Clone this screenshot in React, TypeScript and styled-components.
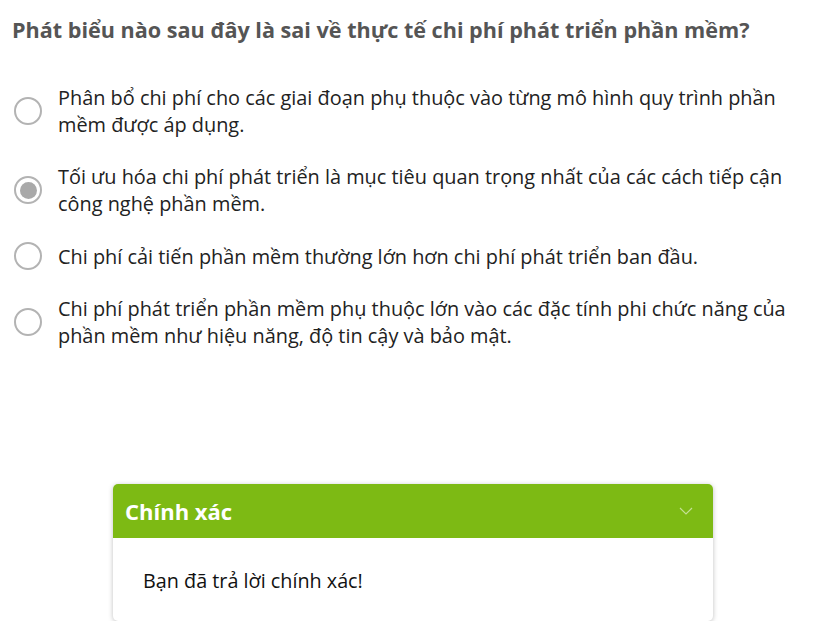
import React from "react";
import styled, { createGlobalStyle } from "styled-components";

const Global = createGlobalStyle`
  html, body { margin: 0; padding: 0; background: #fff; }
  body { font-family: "Open Sans", "Noto Sans", sans-serif; }
`;

const Page = styled.div`
  padding: 14px 12px 0 12px;
  width: 833px;
  box-sizing: border-box;
`;

const Question = styled.h1`
  margin: 0;
  font-size: 21.6px;
  line-height: 32px;
  font-weight: 700;
  color: #555;
`;

const Options = styled.div`
  display: flex;
  flex-direction: column;
  gap: 25px;
  margin-top: 38px;
`;

const Option = styled.label`
  display: flex;
  align-items: center;
  gap: 16px;
  padding-left: 2px;
`;

const Radio = styled.span<{ $checked?: boolean }>`
  flex: none;
  width: 28px;
  height: 28px;
  box-sizing: border-box;
  border-radius: 50%;
  border: 2.5px solid #b3b3b3;
  display: flex;
  align-items: center;
  justify-content: center;
  &::after {
    content: "";
    width: 17px;
    height: 17px;
    border-radius: 50%;
    background: #a9a9a9;
    display: ${(p) => (p.$checked ? "block" : "none")};
  }
`;

const OptionText = styled.span`
  font-size: 19.9px;
  line-height: 27px;
  color: #222;
  max-width: 750px;
`;

const Card = styled.div`
  margin: 135px 0 0 101px;
  width: 600px;
  border-radius: 5px;
  background: #fff;
  box-shadow: 0 1px 5px rgba(0, 0, 0, 0.25);
  overflow: hidden;
`;

const CardHeader = styled.div`
  height: 54px;
  background: #7dba14;
  display: flex;
  align-items: center;
  justify-content: space-between;
  padding: 0 20px 0 12px;
`;

const CardTitle = styled.span`
  font-size: 22px;
  font-weight: 700;
  color: #fff;
`;

const CardBody = styled.div`
  padding: 28px 30px 26px;
  font-size: 19.8px;
  line-height: 29px;
  color: #111;
`;

const options = [
  "Phân bổ chi phí cho các giai đoạn phụ thuộc vào từng mô hình quy trình phần mềm được áp dụng.",
  "Tối ưu hóa chi phí phát triển là mục tiêu quan trọng nhất của các cách tiếp cận công nghệ phần mềm.",
  "Chi phí cải tiến phần mềm thường lớn hơn chi phí phát triển ban đầu.",
  "Chi phí phát triển phần mềm phụ thuộc lớn vào các đặc tính phi chức năng của phần mềm như hiệu năng, độ tin cậy và bảo mật.",
];

export default function App() {
  return (
    <Page>
      <Global />
      <Question>Phát biểu nào sau đây là sai về thực tế chi phí phát triển phần mềm?</Question>
      <Options>
        {options.map((t, i) => (
          <Option key={i}>
            <Radio $checked={i === 1} />
            <OptionText>{t}</OptionText>
          </Option>
        ))}
      </Options>
      <Card>
        <CardHeader>
          <CardTitle>Chính xác</CardTitle>
          <svg width="14" height="8" viewBox="0 0 14 8" fill="none">
            <path d="M1 1l6 6 6-6" stroke="rgba(255,255,255,0.55)" strokeWidth="1.2" />
          </svg>
        </CardHeader>
        <CardBody>Bạn đã trả lời chính xác!</CardBody>
      </Card>
    </Page>
  );
}
